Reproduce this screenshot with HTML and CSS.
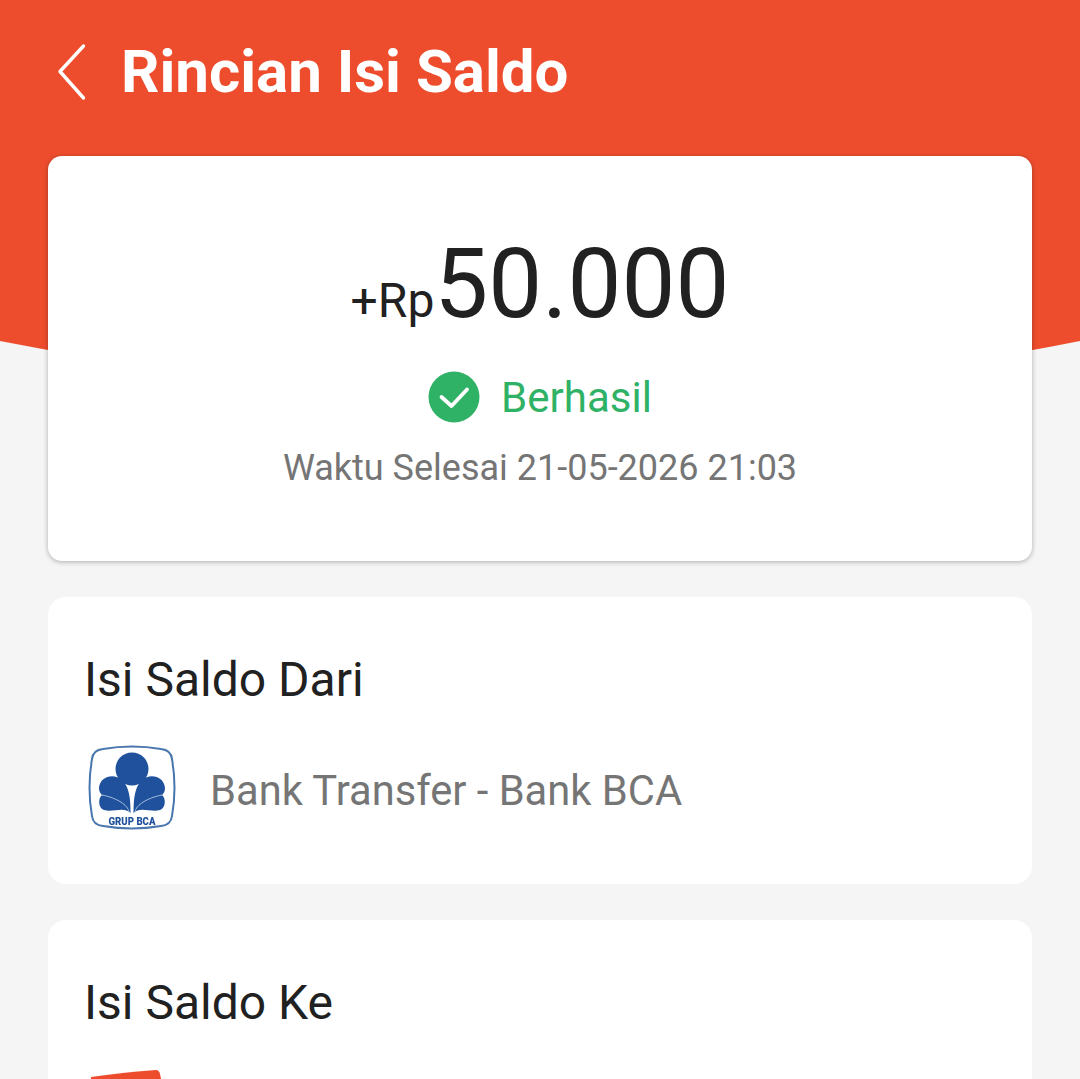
FILE: index.html
```html
<!DOCTYPE html>
<html lang="id">

<head>
    <meta charset="UTF-8">
    <meta name="viewport" content="width=device-width, initial-scale=1.0">
    <title>Rincian Isi Saldo</title>
    <link rel="stylesheet" href="styles.css">
</head>

<body>
    <!-- Orange backdrop with the curved bottom edge -->
    <svg class="backdrop" viewBox="0 0 1080 460" width="1080" height="460" aria-hidden="true">
        <path d="M0 0H1080V341Q540 449 0 341Z" fill="#ee4d2d" />
    </svg>

    <header class="topbar">
        <svg class="back-icon" viewBox="0 0 30 58" width="30" height="58" aria-label="Kembali">
            <path d="M26.5 3 L3 28.5 L26.5 55" fill="none" stroke="#fff" stroke-width="3.4" stroke-linecap="round" stroke-linejoin="round" />
        </svg>
        <h1 class="title">Rincian Isi Saldo</h1>
    </header>

    <main class="content">
        <section class="card summary">
            <div class="amount">
                <span class="amount-prefix">+Rp</span><span class="amount-value">50.000</span>
            </div>
            <div class="status">
                <svg class="status-icon" viewBox="0 0 52 52" width="52" height="52" aria-hidden="true">
                    <circle cx="26" cy="26" r="25.5" fill="#2fb266" />
                    <path d="M13.5 26 L23.5 35 L39 18.5" fill="none" stroke="#fff" stroke-width="3.8" stroke-linecap="round" stroke-linejoin="round" />
                </svg>
                <span class="status-text">Berhasil</span>
            </div>
            <div class="finish-time">Waktu Selesai 21-05-2026 21:03</div>
        </section>

        <section class="card detail">
            <h2 class="detail-title">Isi Saldo Dari</h2>
            <div class="detail-row">
                <svg class="bank-logo" viewBox="0 0 92 86" width="92" height="86" aria-hidden="true">
                    <path d="M19 4 Q48 -1 77 4 Q87 5 88 14 Q93 43 88 71 Q87 80 77 81 Q48 86 19 81 Q9 80 8 71 Q3 43 8 14 Q9 5 19 4Z" fill="#fff" stroke="#4a76ae" stroke-width="2" />
                    <circle cx="48" cy="24" r="16.5" fill="#1f519c" />
                    <!-- left and right wings, two lobes each -->
                    <path d="M46.5 68 C46.5 52 45 42 38 35 C30 28 16 31 15 43 C15 46 16 48 18 50 C14 53 14 63 20 65 C28 68 40 61 46.5 68Z" fill="#1f519c" />
                    <path d="M49.5 68 C49.5 52 51 42 58 35 C66 28 80 31 81 43 C81 46 80 48 78 50 C82 53 82 63 76 65 C68 68 56 61 49.5 68Z" fill="#1f519c" />
                    <path d="M45 67 C44 60 33 53 18 50 M51 67 C52 60 63 53 78 50" fill="none" stroke="#a9bfdc" stroke-width="1" />
                    <text class="bank-logo-text" x="48" y="80" text-anchor="middle" textLength="47" lengthAdjust="spacingAndGlyphs">GRUP BCA</text>
                </svg>
                <span class="detail-text">Bank Transfer - Bank BCA</span>
            </div>
        </section>

        <section class="card detail">
            <h2 class="detail-title">Isi Saldo Ke</h2>
            <div class="detail-row">
                <svg class="wallet-logo" viewBox="0 0 92 86" width="92" height="86" aria-hidden="true">
                    <path d="M7 9 Q42 4 72 2 Q75 2 76 6 L79 20 H7Z" fill="#ee4d2d" />
                </svg>
            </div>
        </section>
    </main>
</body>

</html>
```

FILE: styles.css
```css
html,
body {
    height: 100vh;
    overflow: hidden;
}

body {
    position: relative;
    margin: 0;
    background-color: #f5f5f5;
    color: #212121;
    font-family: 'Roboto', sans-serif;
}

.backdrop {
    position: absolute;
    top: 0;
    left: 0;
}

.topbar {
    position: relative;
    height: 156px;
    box-sizing: border-box;
    padding: 0 0 14px 57px;
    display: flex;
    align-items: center;
    gap: 34px;
    color: #ffffff;
}

.back-icon {
    flex: none;
    margin-top: 2px;
}

.title {
    margin: 0;
    font-size: 60px;
    font-weight: 700;
}

.content {
    position: relative;
    display: flex;
    flex-direction: column;
    gap: 36px;
    padding: 0 48px;
}

.card {
    background-color: #ffffff;
    border-radius: 18px;
}

.summary {
    height: 405px;
    box-sizing: border-box;
    padding-top: 78px;
    display: flex;
    flex-direction: column;
    align-items: center;
    border-radius: 14px;
    box-shadow: 0 1px 5px rgba(0, 0, 0, 0.3);
}

.amount {
    display: flex;
    align-items: baseline;
    line-height: 100px;
}

.amount-prefix {
    font-size: 48px;
}

.amount-value {
    font-size: 96px;
}

.status {
    margin-top: 20px;
    display: flex;
    align-items: center;
    gap: 21px;
}

.status-text {
    font-size: 42px;
    color: #2fb266;
}

.finish-time {
    margin-top: 24px;
    font-size: 36px;
    color: #757575;
}

.detail {
    padding: 56px 36px 53px;
}

.detail-title {
    margin: 0;
    font-size: 48px;
    font-weight: 400;
    line-height: 54px;
}

.detail-row {
    margin-top: 38px;
    display: flex;
    align-items: center;
    gap: 34px;
}

.detail-text {
    padding-top: 4px;
    font-size: 41.7px;
    color: #757575;
}

.bank-logo,
.wallet-logo {
    flex: none;
}

.bank-logo {
    filter: blur(0.4px);
}

.bank-logo-text {
    font-family: 'Roboto', sans-serif;
    font-size: 10px;
    font-weight: 900;
    fill: #1f519c;
}
```
